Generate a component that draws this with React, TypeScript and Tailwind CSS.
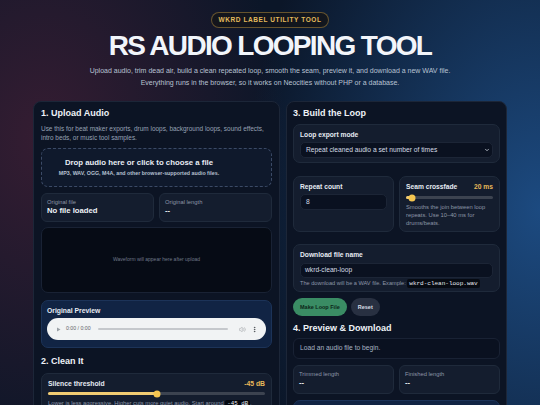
import { ChevronDown, Volume2, EllipsisVertical } from "lucide-react";

function Slider({ pct }: { pct: number }) {
  return (
    <div className="relative h-[8px] flex items-center">
      <div className="h-[3px] w-full rounded-full bg-[#3c4350]">
        <div className="h-full rounded-full bg-[#f0cb72]" style={{ width: `${pct}%` }} />
      </div>
      <div
        className="absolute top-1/2 h-[7px] w-[7px] -translate-x-1/2 -translate-y-1/2 rounded-full bg-[#f5c650]"
        style={{ left: `${pct}%` }}
      />
    </div>
  );
}

function Stat({ label, value }: { label: string; value: string }) {
  return (
    <div className="rounded-[6px] border border-[#1f2a3b] bg-[#141d2e] px-[5px] pt-[4.5px] h-[29px]">
      <div className="text-[5.8px] leading-[7px] text-[#8d97a8]">{label}</div>
      <div className="mt-[0.5px] text-[7.7px] leading-[10px] font-bold text-[#eef2f7]">{value}</div>
    </div>
  );
}

export default function App() {
  return (
    <div className="min-h-screen overflow-hidden bg-[#0b1628] bg-[radial-gradient(ellipse_45%_70%_at_8%_30%,rgba(88,34,58,0.55),transparent),radial-gradient(ellipse_55%_90%_at_100%_45%,#1c4a80,transparent)] font-['Liberation_Sans',Arial,sans-serif] text-[#eef2f7]">
      {/* Encabezado */}
      <header className="flex flex-col items-center pt-[12px]">
        <div className="flex h-[16px] w-[118px] items-center justify-center rounded-full border border-[#8a6d34]/70 bg-[#141519]/80 text-[6.5px] font-bold tracking-[0.09em] text-[#e3bb5c]">
          WKRD LABEL UTILITY TOOL
        </div>
        <h1 className="mt-[4px] text-[28px] leading-[28px] font-bold tracking-[-0.06em] text-[#f2f5fa]">
          RS AUDIO LOOPING TOOL
        </h1>
        <p className="mt-[5px] text-center text-[7px] leading-[12px] text-[#b8c2d2]">
          Upload audio, trim dead air, build a clean repeated loop, smooth the seam, preview it, and download a new WAV file.
          <br />
          Everything runs in the browser, so it works on Neocities without PHP or a database.
        </p>
      </header>

      <main className="mx-auto mt-[12px] flex w-[474px] items-start gap-[6px]">
        {/* Panel izquierdo */}
        <section className="w-[247px] rounded-[8px] border border-[#1c2638] bg-[#0c1424] px-[7px] pt-[5.5px] pb-3">
          <h2 className="text-[9px] leading-[11px] font-bold">1. Upload Audio</h2>
          <p className="mt-[5px] text-[6.45px] leading-[9px] text-[#97a2b4]">
            Use this for beat maker exports, drum loops, background loops, sound effects, intro beds, or music tool samples.
          </p>

          <div className="mt-[6.5px] flex h-[39px] flex-col items-center justify-center gap-[2px] rounded-[7px] border border-dashed border-[#3b4a66] bg-[#0f192c] pr-[35px]">
            <div className="text-[7.8px] leading-[10px] font-bold text-[#e8edf4]">
              Drop audio here or click to choose a file
            </div>
            <div className="text-[5.3px] leading-[7px] font-bold text-[#b6c0d0]">
              MP3, WAV, OGG, M4A, and other browser-supported audio files.
            </div>
          </div>

          <div className="mt-[6px] grid grid-cols-2 gap-[5px]">
            <Stat label="Original file" value="No file loaded" />
            <Stat label="Original length" value="--" />
          </div>

          <div className="mt-[5px] flex h-[66px] items-center justify-center rounded-[7px] border border-[#192234] bg-[#060b15] text-[5px] text-[#6f788a]">
            Waveform will appear here after upload
          </div>

          <div className="mt-[7px] rounded-[7px] border border-[#1c3358] bg-[#112444] px-[5px] pt-[4.5px] pb-[7px]">
            <div className="text-[6.8px] leading-[9px] font-bold text-[#e6ebf2]">Original Preview</div>
            <div className="mt-[3.5px] flex h-[22px] items-center rounded-full bg-[#f1f3f4] pl-[9px] pr-[8px] text-[#3c4043]">
              <svg width="5" height="5" viewBox="0 0 10 10" className="shrink-0">
                <path d="M2 1 L9 5 L2 9 Z" fill="#9aa0a6" />
              </svg>
              <span className="ml-[5px] text-[5.2px] text-[#5f6368]">0:00 / 0:00</span>
              <div className="ml-[7px] h-[2px] flex-1 rounded-full bg-[#c5c8cc]" />
              <Volume2 className="ml-[11px] h-[7px] w-[7px] text-[#b0b4b8]" strokeWidth={2.5} />
              <EllipsisVertical className="ml-[5px] h-[7px] w-[7px] text-[#4d5156]" strokeWidth={3} />
            </div>
          </div>

          <h2 className="mt-[7.5px] text-[9px] leading-[11px] font-bold">2. Clean It</h2>

          <div className="mt-[6.5px] rounded-[7px] border border-[#1f2a3b] bg-[#141d2e] px-[6px] pt-[4.5px] pb-[6px]">
            <div className="flex items-center justify-between text-[6.8px] leading-[9px] font-bold">
              <span className="text-[#e6ebf2]">Silence threshold</span>
              <span className="text-[#e7b95a]">-45 dB</span>
            </div>
            <div className="mt-[2px]">
              <Slider pct={50} />
            </div>
            <p className="mt-[1px] text-[5.8px] leading-[9px] text-[#8d97a8]">
              Lower is less aggressive. Higher cuts more quiet audio. Start around{" "}
              <code className="rounded-[2px] bg-[#05080f] px-[2px] font-['Liberation_Mono',monospace] text-[#e8edf4]">-45 dB</code>.
            </p>
          </div>

          <div className="mt-[6px] rounded-[7px] border border-[#1f2a3b] bg-[#141d2e] px-[6px] pt-[4.5px] pb-[6px]">
            <div className="flex items-center justify-between text-[6.8px] leading-[9px] font-bold">
              <span className="text-[#e6ebf2]">Minimum silence length</span>
              <span className="text-[#e7b95a]">120 ms</span>
            </div>
            <div className="mt-[3px]">
              <Slider pct={24} />
            </div>
          </div>
        </section>

        {/* Panel derecho */}
        <section className="w-[221px] rounded-[8px] border border-[#1c2638] bg-[#0c1424] px-[6px] pt-[5.5px] pb-3">
          <h2 className="text-[9px] leading-[11px] font-bold">3. Build the Loop</h2>

          <div className="mt-[5.5px] h-[39px] rounded-[7px] border border-[#1f2a3b] bg-[#141d2e] px-[6px] pt-[4.5px]">
            <div className="text-[6.7px] leading-[9px] font-bold text-[#e6ebf2]">Loop export mode</div>
            <div className="mt-[3.5px] flex h-[16px] items-center justify-between rounded-[5px] border border-[#1c2536] bg-[#0a1120] pl-[5px] pr-[2px] text-[6.7px] text-[#d5dce6]">
              <span>Repeat cleaned audio a set number of times</span>
              <ChevronDown className="h-[6px] w-[6px] text-[#d5dce6]" strokeWidth={3} />
            </div>
          </div>

          <div className="mt-[13px] grid grid-cols-2 gap-[5px]">
            <div className="h-[56px] rounded-[7px] border border-[#1f2a3b] bg-[#141d2e] px-[6px] pt-[4.5px]">
              <div className="text-[6.7px] leading-[9px] font-bold text-[#e6ebf2]">Repeat count</div>
              <div className="mt-[3.5px] flex h-[16px] items-center rounded-[5px] border border-[#1c2536] bg-[#0a1120] px-[5px] text-[6.7px] text-[#d5dce6]">
                8
              </div>
            </div>
            <div className="h-[56px] rounded-[7px] border border-[#1f2a3b] bg-[#141d2e] px-[6px] pt-[4.5px]">
              <div className="flex items-center justify-between text-[6.7px] leading-[9px] font-bold">
                <span className="text-[#e6ebf2]">Seam crossfade</span>
                <span className="text-[#e7b95a]">20 ms</span>
              </div>
              <div className="mt-[3px]">
                <Slider pct={7} />
              </div>
              <p className="mt-[1px] text-[5.8px] leading-[8px] text-[#8d97a8]">
                Smooths the join between loop repeats. Use 10–40 ms for drums/beats.
              </p>
            </div>
          </div>

          <div className="mt-[12px] h-[48px] rounded-[7px] border border-[#1f2a3b] bg-[#141d2e] px-[6px] pt-[4.5px]">
            <div className="text-[6.7px] leading-[9px] font-bold text-[#e6ebf2]">Download file name</div>
            <div className="mt-[4.5px] flex h-[15px] items-center rounded-[5px] border border-[#1c2536] bg-[#0a1120] px-[4px] text-[6.7px] text-[#d5dce6]">
              wkrd-clean-loop
            </div>
            <p className="mt-[1px] text-[5.6px] leading-[8px] text-[#8d97a8]">
              The download will be a WAV file. Example:{" "}
              <code className="rounded-[2px] bg-[#060a12] px-[2px] py-[1px] font-['Liberation_Mono',monospace] text-[6px] text-[#e5e9f0]">
                wkrd-clean-loop.wav
              </code>
            </p>
          </div>

          <div className="mt-[6px] flex gap-[4px]">
            <button className="h-[18px] rounded-full bg-[#3a8c64] px-[7px] text-[5.5px] font-bold text-[#0c2619]">
              Make Loop File
            </button>
            <button className="h-[18px] rounded-full bg-[#283041] px-[7px] text-[5.5px] font-bold text-[#d8dde6]">
              Reset
            </button>
          </div>

          <h2 className="mt-[6.5px] text-[9px] leading-[11px] font-bold">4. Preview &amp; Download</h2>

          <div className="mt-[4.5px] flex h-[21px] items-center rounded-[6px] border border-[#192234] bg-[#0a1120] px-[6px] text-[6.7px] text-[#a9b4c4]">
            Load an audio file to begin.
          </div>

          <div className="mt-[6px] grid grid-cols-2 gap-[5px]">
            <Stat label="Trimmed length" value="--" />
            <Stat label="Finished length" value="--" />
          </div>

          <div className="mt-[6px] h-[48px] rounded-[7px] border border-[#1c3358] bg-[#112444] px-[5px] pt-[4.5px]">
            <div className="text-[6.8px] leading-[9px] font-bold text-[#e6ebf2]">Loop Preview</div>
          </div>
        </section>
      </main>
    </div>
  );
}
